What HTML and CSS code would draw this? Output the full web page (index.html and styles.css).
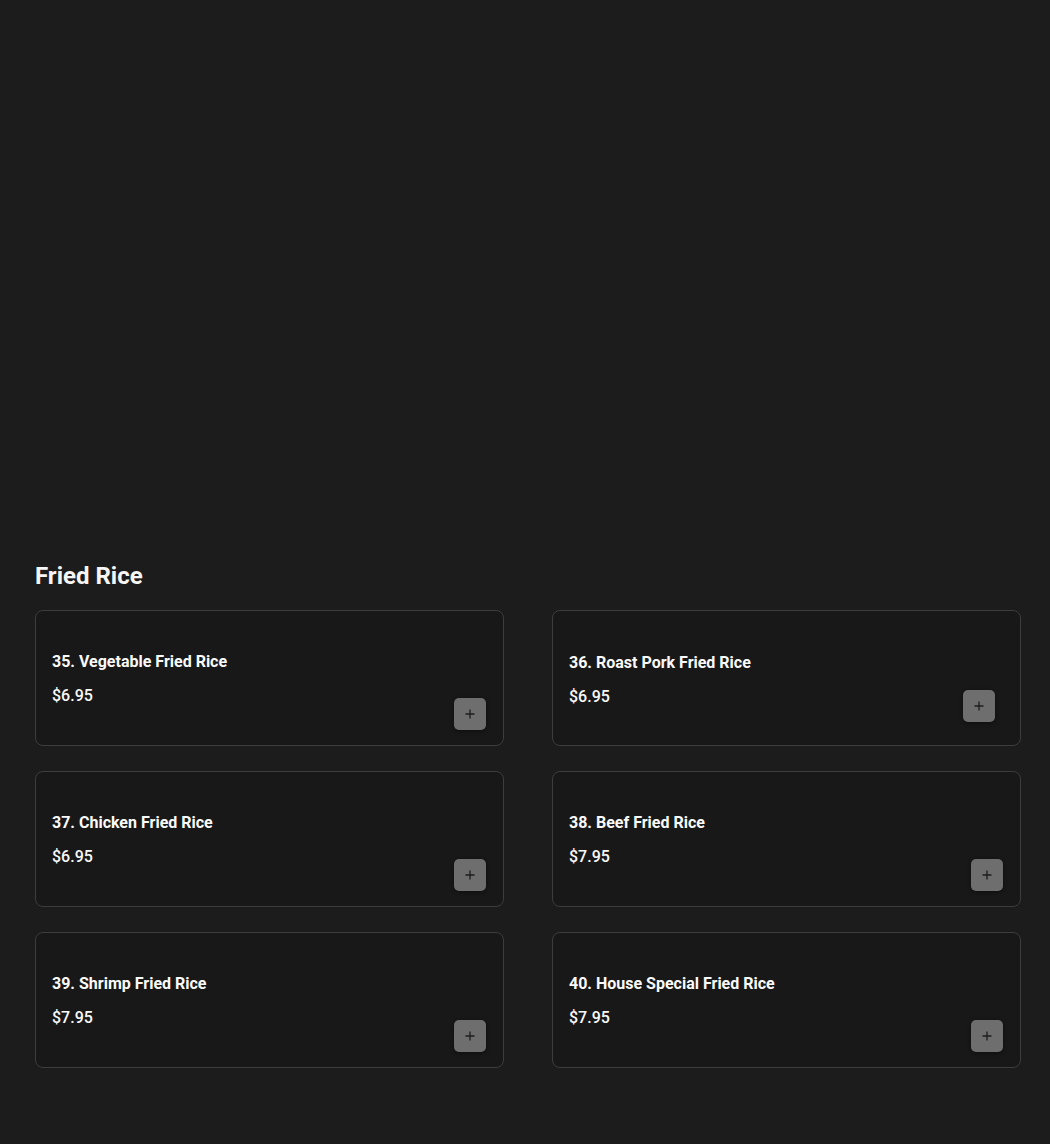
FILE: index.html
```html
<!DOCTYPE html>
<html lang="en">
<head>
<meta charset="utf-8">
<title>Fried Rice</title>
<link rel="stylesheet" href="styles.css">
</head>
<body>
<div class="hero"></div>
<section class="category">
  <h2 class="category-title">Fried Rice</h2>
  <div class="grid">
    <div class="card">
      <div class="info"><div class="name">35. Vegetable Fried Rice</div><div class="price">$6.95</div></div>
      <button class="add"><svg viewBox="0 0 12 12" width="12" height="12"><path d="M6 1.5v9M1.5 6h9" stroke="#1e1e1e" stroke-width="1.3"/></svg></button>
    </div>
    <div class="card">
      <div class="info info-low"><div class="name">36. Roast Pork Fried Rice</div><div class="price">$6.95</div></div>
      <button class="add add-lift"><svg viewBox="0 0 12 12" width="12" height="12"><path d="M6 1.5v9M1.5 6h9" stroke="#1e1e1e" stroke-width="1.3"/></svg></button>
    </div>
    <div class="card">
      <div class="info"><div class="name">37. Chicken Fried Rice</div><div class="price">$6.95</div></div>
      <button class="add"><svg viewBox="0 0 12 12" width="12" height="12"><path d="M6 1.5v9M1.5 6h9" stroke="#1e1e1e" stroke-width="1.3"/></svg></button>
    </div>
    <div class="card">
      <div class="info"><div class="name">38. Beef Fried Rice</div><div class="price">$7.95</div></div>
      <button class="add"><svg viewBox="0 0 12 12" width="12" height="12"><path d="M6 1.5v9M1.5 6h9" stroke="#1e1e1e" stroke-width="1.3"/></svg></button>
    </div>
    <div class="card">
      <div class="info"><div class="name">39. Shrimp Fried Rice</div><div class="price">$7.95</div></div>
      <button class="add"><svg viewBox="0 0 12 12" width="12" height="12"><path d="M6 1.5v9M1.5 6h9" stroke="#1e1e1e" stroke-width="1.3"/></svg></button>
    </div>
    <div class="card">
      <div class="info"><div class="name">40. House Special Fried Rice</div><div class="price">$7.95</div></div>
      <button class="add"><svg viewBox="0 0 12 12" width="12" height="12"><path d="M6 1.5v9M1.5 6h9" stroke="#1e1e1e" stroke-width="1.3"/></svg></button>
    </div>
  </div>
</section>
</body>
</html>
```
FILE: styles.css
```css
html, body {
  margin: 0;
  padding: 0;
  background: #1c1c1c;
  font-family: Roboto, "Liberation Sans", Arial, sans-serif;
  color: #f2f2f2;
}
.hero {
  height: 562px;
}
.category {
  padding: 0 29px 75px 35px;
}
.category-title {
  margin: 0 0 20px 0;
  font-size: 24px;
  line-height: 28px;
  font-weight: 700;
  color: #f6f6f6;
}
.grid {
  display: grid;
  grid-template-columns: 469px 469px;
  column-gap: 48px;
  row-gap: 25px;
}
.card {
  box-sizing: border-box;
  height: 136px;
  background: #181818;
  border: 1px solid #3d3d3d;
  border-radius: 8px;
  padding: 41px 17px 15px 16px;
  display: flex;
  justify-content: space-between;
  align-items: flex-end;
}
.info {
  align-self: flex-start;
}
.info-low {
  padding-top: 1px;
}
.name {
  font-size: 16px;
  line-height: 20px;
  font-weight: 700;
  color: #fafafa;
}
.price {
  margin-top: 14px;
  font-size: 16px;
  line-height: 20px;
  font-weight: 500;
  color: #f8f8f8;
}
.add {
  width: 32px;
  height: 32px;
  padding: 0;
  border: none;
  border-radius: 5px;
  background: #6e6e6e;
  box-shadow: 0 1px 4px rgba(0,0,0,0.45);
  display: flex;
  align-items: center;
  justify-content: center;
  cursor: pointer;
}
.add svg {
  display: block;
}
.add-lift {
  transform: translate(-8px, -8px);
}
```
